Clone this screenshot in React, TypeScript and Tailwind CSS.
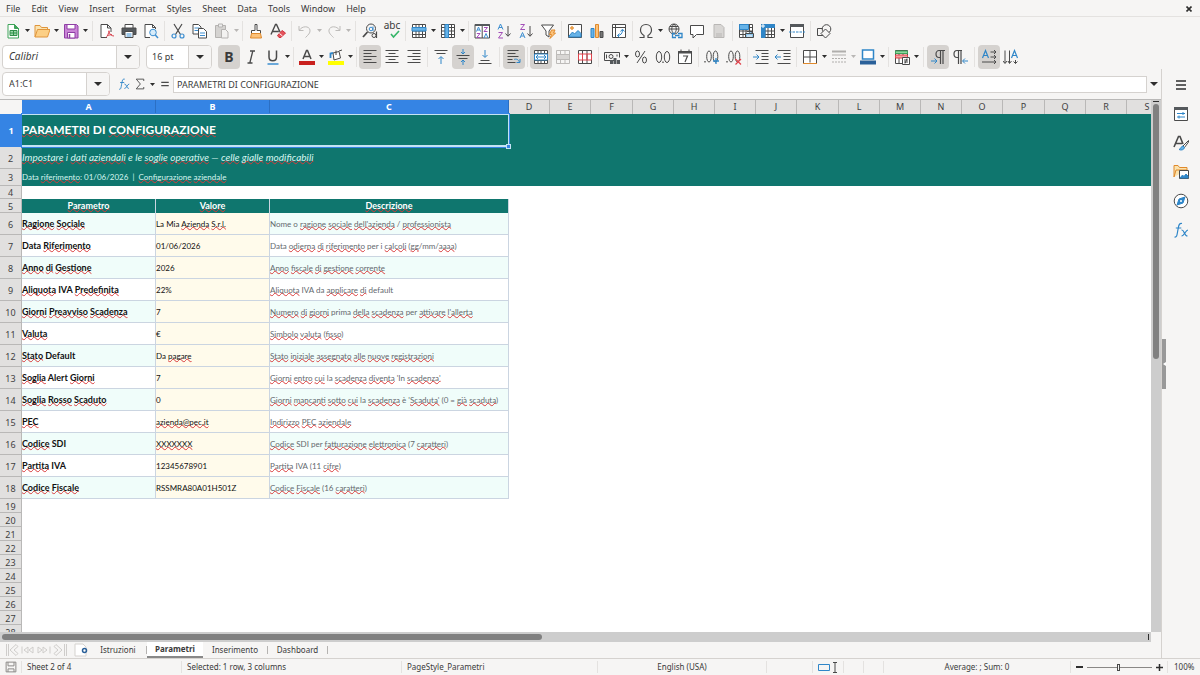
import type { ReactNode } from "react";

type IconProps = { children: ReactNode; size?: string };

const Svg = ({ children, size = "w-4 h-4" }: IconProps) => (
  <svg viewBox="0 0 16 16" className={size} fill="none" stroke="#4a4a4a" strokeWidth="1" aria-hidden="true">
    {children}
  </svg>
);

const grid = "M1.5 1.5h13v13h-13zM1.5 4.5h13M1.5 8h13M1.5 11.5h13M5 1.5v13M8 1.5v13M11.5 1.5v13";

const icons: Record<string, ReactNode> = {
  new: (
    <>
      <path d="M3 1.5h6.5l4 4v9.500h-10.500z" fill="#fff" stroke="#3fa35a" />
      <path d="M9.500 1.500l4 4h-4z" fill="#3fa35a" stroke="#3fa35a" />
      <path d="M5 7.500h7v5h-7zM5 10h7M8.500 7.500v5" fill="#9bd8a8" stroke="#2f8f4a" />
    </>
  ),
  open: (
    <>
      <path d="M1 14V2.500h5l1.500 2h6V6" fill="#fbe3ae" stroke="#e0953c" />
      <path d="M1 14L3.500 6.500H16L13.500 14z" fill="#fccf85" stroke="#e0953c" />
    </>
  ),
  save: (
    <>
      <path d="M1.500 1.500h12l1.500 1.500v12h-13.500z" fill="#c983d6" stroke="#8f3fa5" />
      <path d="M4 1.500h8v4.500h-8zM4.500 9.500h7.500v5.500h-7.500z" fill="#fff" stroke="#8f3fa5" />
      <path d="M6.500 11v4" stroke="#8f3fa5" strokeWidth="1.500" />
    </>
  ),
  pdf: (
    <>
      <path d="M12 9V5L8.500 1.500H2v13h6" fill="#fff" />
      <path d="M8.500 1.500V5H12" />
      <path d="M10 7.500c0 3-2 6-3 7M10 8c0 3 2.500 5 5 5M8 12.500l5-1" stroke="#d9434e" />
    </>
  ),
  print: (
    <>
      <path d="M4 5V1.500h8V5" fill="#fff" />
      <path d="M1 5h14v6.500H1z" fill="#55595c" />
      <path d="M4 8.500h8v6H4z" fill="#fff" />
      <path d="M5.500 11h5M5.500 13h5" stroke="#3d8ed0" />
    </>
  ),
  preview: (
    <>
      <path d="M12.500 6V4.500L9.500 1.500H2v13h5" fill="#fff" />
      <path d="M9.500 1.500v3h3" />
      <circle cx="10" cy="9.500" r="3.300" fill="#d7ecfa" stroke="#3d8ed0" />
      <path d="M12.300 12l2.700 3" stroke="#3d8ed0" strokeWidth="1.500" />
    </>
  ),
  cut: (
    <>
      <path d="M4 1l6.500 10.500M12 1L5.500 11.500" strokeWidth="1.200" />
      <circle cx="4" cy="13" r="2" stroke="#3d8ed0" strokeWidth="1.200" />
      <circle cx="12" cy="13" r="2" stroke="#3d8ed0" strokeWidth="1.200" />
    </>
  ),
  copy: (
    <>
      <path d="M1 1.500h5.500l2.500 2.500v7H1z" fill="#fff" />
      <path d="M2.500 5h5M2.500 7.500h5" stroke="#3d8ed0" />
      <path d="M6.500 5.500h5l3 3v6.500h-8z" fill="#fff" />
      <path d="M8 10h5M8 12.500h5" stroke="#3d8ed0" />
    </>
  ),
  paste: (
    <>
      <path d="M1.500 2.500h10v12h-10z" fill="#d5d3d1" stroke="#b5b3b1" />
      <path d="M4.500 1h4v3h-4z" fill="#eee" stroke="#b5b3b1" />
      <path d="M7.500 6.500h4l2.500 2.500v6H7.500z" fill="#f3f2f1" stroke="#b5b3b1" />
    </>
  ),
  clone: (
    <>
      <path d="M7 1.500h2v6h3.500v3h-9v-3H7z" fill="#fff" />
      <path d="M3.500 10.500h9l1 4.500h-11z" fill="#fcc27a" stroke="#e08a2c" />
    </>
  ),
  clear: (
    <>
      <path d="M1 11.500L5.500 1.500h1L10 9M2.800 8.500h6" strokeWidth="1.400" />
      <path d="M7.500 12.500l4.500-5 3.500 2.500-4.500 4.500H9z" fill="#e5545c" stroke="#d0343e" />
      <path d="M9.500 10.500l3 2.500" stroke="#fff" />
    </>
  ),
  undo: <path d="M2 3v4.500h4.500M2.500 7C5 3 12 2.500 13 7c.5 3-2 5-4.500 7.500" stroke="#bdbbb9" />,
  redo: <path d="M14 3v4.500H9.500M13.500 7C11 3 4 2.500 3 7c-.5 3 2 5 4.500 7.500" stroke="#bdbbb9" />,
  find: (
    <>
      <circle cx="9" cy="5.500" r="4.500" />
      <path d="M5.500 9L1 14" strokeWidth="1.800" />
      <circle cx="9" cy="6" r="1.800" stroke="#3d8ed0" />
      <path d="M11 3.500V8" stroke="#3d8ed0" />
      <circle cx="12" cy="12.500" r="2" />
      <path d="M14.500 8.500V15" strokeWidth="1.200" />
    </>
  ),
  spell: <path d="M7 11l2.500 3L15 8" stroke="#35b568" strokeWidth="1.600" />,
  row: (
    <>
      <path d={grid} fill="#fff" />
      <path d="M1 4.500h14V8H1z" fill="#66b3e8" stroke="#2f86c8" />
    </>
  ),
  col: (
    <>
      <path d={grid} fill="#fff" />
      <path d="M5 1.500h3.500v13H5z" fill="#66b3e8" stroke="#2f86c8" />
    </>
  ),
  sort: (
    <>
      <path d="M1 1.500h14.500v13.500H1zM8.200 1.500V15" fill="#fff" />
      <path d="M1 1h14.500v2H1z" fill="#55595c" stroke="none" />
      <path d="M2.500 8.500L4.500 4l2 4.500M3.200 7h2.500M10 15l2-4.500 2 4.500" stroke="#3d8ed0" />
      <path d="M2.800 10.500h3.200L2.800 14.500h3.500M10 4.500h3.500L10 8.500h3.500" stroke="#a34fb8" />
    </>
  ),
  az: (
    <>
      <path d="M2 6.500L4.500 1l2.500 5.500M3 4.500h3" stroke="#3d8ed0" />
      <path d="M2.500 9.500h4l-4 5.500h4.500" stroke="#a34fb8" />
      <path d="M12 3v10M9.500 10.500L12 13.300l2.500-2.800" />
    </>
  ),
  za: (
    <>
      <path d="M2.500 1.500h4L2.500 6.500h4.500" stroke="#a34fb8" />
      <path d="M2 15l2.500-5.500L7 15M3 13h3" stroke="#3d8ed0" />
      <path d="M12 3v10M9.500 10.500L12 13.300l2.500-2.800" />
    </>
  ),
  filter: (
    <>
      <path d="M1.500 2h12L9 8v6l-3-2V8z" fill="#fff" />
      <path d="M11.500 7h3.500l-1.500 3h2L10 15.500l1.500-4H9.500z" fill="#fcc27a" stroke="#e08a2c" />
    </>
  ),
  image: (
    <>
      <path d="M1.500 1.500h13v13h-13z" fill="#fff" />
      <circle cx="5" cy="5" r="1.300" fill="#fcc27a" stroke="#e08a2c" />
      <path d="M2 13l3.500-4 2 2L11 7.500l3 3V14H2z" fill="#66b3e8" stroke="#2f86c8" />
    </>
  ),
  chart: (
    <>
      <path d="M2 5.500h3v9H2z" fill="#66b3e8" stroke="#2f86c8" />
      <path d="M6.500 1.500h3v13h-3z" fill="#fcc27a" stroke="#e08a2c" />
      <path d="M11 8.500h3v6h-3z" fill="#777" />
    </>
  ),
  pivot: (
    <>
      <path d="M1.500 1.500h13v13h-13zM1.500 4.500h13M4.500 1.500v13" fill="#fff" />
      <path d="M6.500 12.500c3 0 5-2 5-5.500M9.500 8.500l2-2.300 2 2.300M8.500 10.500l-2 2 2 2" stroke="#2f86c8" />
    </>
  ),
  omega: <path d="M1.500 14.500H6v-2C3.500 11 2.500 9 2.500 7c0-3 2-5.500 5.500-5.500s5.500 2.500 5.500 5.500c0 2-1 4-3.500 5.500v2h4.500" strokeWidth="1.200" />,
  link: (
    <>
      <circle cx="7" cy="6" r="5" />
      <path d="M2 6h10M7 1c-3 3-3 7 0 10M7 1c3 3 3 7 0 10M3 3.500h8" />
      <path d="M8 10.500H5.500v4H9M11 10.500h4v4h-4M8 12.500h4.500" stroke="#2f86c8" strokeWidth="1.300" />
    </>
  ),
  comment: <path d="M1.500 2.500h13v9H7.500L4 15v-3.500H1.500z" fill="#fff" />,
  headfoot: <path d="M3 1.500h7l3 3v10H3zM5 11h6M5 13h6" fill="#d8d6d4" stroke="#b9b7b5" />,
  printarea: (
    <>
      <path d={grid} fill="#fff" />
      <path d="M1.500 1.500h9v5h-9z" fill="#66b3e8" stroke="#2f86c8" />
      <path d="M9 8.500h5v2M7.500 10.500h8v4h-8z" fill="#8cc4ea" />
      <path d="M9 13h5" stroke="#fff" />
    </>
  ),
  freeze: (
    <>
      <path d={grid} fill="#fff" />
      <path d="M1.500 1.500h13v3H5v10H1.500z" fill="#2f86c8" stroke="#2f86c8" />
      <path d="M3 1v4M1 3h4" stroke="#fff" />
    </>
  ),
  split: (
    <>
      <path d="M1.500 1.500h13v13h-13z" fill="#fff" />
      <path d="M1 1h14v3H1z" fill="#55595c" stroke="none" />
      <path d="M0 9h16" stroke="#2f86c8" strokeDasharray="2.500 1" />
    </>
  ),
  shapes: (
    <>
      <path d="M1.500 5.500h8v7h-8z" />
      <circle cx="10.500" cy="6" r="4.300" fill="#f6f5f4" />
      <path d="M9.500 6l4.500 4.500-4.500 4.500L5 10.500z" fill="#f6f5f4" />
    </>
  ),
  italic: <path d="M7 2h5M4.500 14h5M9.800 2L6.800 14" strokeWidth="1.300" />,
  underline: (
    <>
      <path d="M4 1.500v6.500c0 5 7.500 5 7.500 0V1.500" strokeWidth="1.500" />
      <path d="M2.500 15h11" stroke="#3d8ed0" strokeWidth="1.500" />
    </>
  ),
  fontcolor: (
    <>
      <path d="M4 10L7.500 1.500h1L12 10M5.500 7.500h5" strokeWidth="1.500" />
      <path d="M0 12h16v4H0z" fill="#c9211e" stroke="none" />
    </>
  ),
  highlight: (
    <>
      <path d="M5 4l6-1.500 1.500 6.500-6.500 2zM8 1.500V6" fill="#fff" />
      <path d="M2.500 9V4.500L5 4" stroke="#2f86c8" strokeWidth="1.800" />
      <path d="M11 2l3-1" />
      <path d="M0 12h16v4H0z" fill="#ffff00" stroke="none" />
    </>
  ),
  left: <path d="M1.500 1.500h13M1.500 4.500h8M1.500 7.500h13M1.500 10.500h8M1.500 13.500h13" />,
  center: <path d="M1.500 1.500h13M4.500 4.500h7M1.500 7.500h13M4.500 10.500h7M1.500 13.500h13" />,
  right: <path d="M1.500 1.500h13M6.500 4.500h8M1.500 7.500h13M6.500 10.500h8M1.500 13.500h13" />,
  top: (
    <>
      <path d="M1.500 1.500h13M3.500 4.500h9" />
      <path d="M8 15V8M5.500 10L8 7.500l2.500 2.500" stroke="#2f86c8" />
    </>
  ),
  middle: (
    <>
      <path d="M1.500 6.500h13M3.500 9.500h9" />
      <path d="M8 0v5M6 3l2 2 2-2M8 16v-5M6 13l2-2 2 2" stroke="#2f86c8" />
    </>
  ),
  bottom: (
    <>
      <path d="M3.500 11.500h9M1.500 14.500h13" />
      <path d="M8 1v7M5.500 6L8 8.500 10.500 6" stroke="#2f86c8" />
    </>
  ),
  wrap: (
    <>
      <path d="M1.500 1.500h11M1.500 4.500h8M1.500 7.500h11M1.500 10.500h5M1.500 13.500h8" />
      <path d="M8 10.500c2-1 5 0 5.500 3M10.500 13.500h3.500V10" stroke="#2f86c8" />
    </>
  ),
  merge: (
    <>
      <path d={grid} fill="#fff" />
      <path d="M1.500 5h13v6h-13z" fill="#fff" stroke="#2f86c8" />
      <path d="M3 8h10M5 6L3 8l2 2M11 6l2 2-2 2" stroke="#2f86c8" />
    </>
  ),
  mergeoff: (
    <>
      <path d="M1.500 1.500h13v13h-13zM5.500 1.500v4M10 1.500v4M5.500 10.500v4M10 10.500v4" stroke="#bdbbb9" />
      <path d="M1.500 5.500h13v5h-13z" fill="#d8d6d4" stroke="#bdbbb9" />
    </>
  ),
  unmerge: (
    <>
      <path d="M1.500 1.500h13v13h-13zM5.500 1.500v13M10 1.500v13" fill="#fff" />
      <path d="M1.500 5h13v6h-13zM5.500 5v6M10 5v6" stroke="#e0434c" />
    </>
  ),
  currency: (
    <>
      <path d="M10 11.500H.5v-8h15v5" />
      <circle cx="7" cy="7.500" r="2" />
      <path d="M2.500 5.500v4M13 5.500v2" />
      <path d="M6 11h3v4H6zM9.500 9h3v6h-3zM13 11h3v4h-3z" fill="#55595c" stroke="none" />
    </>
  ),
  percent: (
    <>
      <ellipse cx="4.500" cy="5" rx="2" ry="3" />
      <ellipse cx="11.500" cy="11" rx="2" ry="3" />
      <path d="M12 2L4 14" />
    </>
  ),
  number: (
    <>
      <ellipse cx="4" cy="8" rx="2.700" ry="5.500" />
      <ellipse cx="12" cy="8" rx="2.700" ry="5.500" />
      <path d="M8 12.500v1.500" strokeWidth="1.300" />
    </>
  ),
  date: (
    <>
      <path d="M1.500 2.500h13v12h-13zM4 .5v3M12 .5v3" fill="#fff" />
      <path d="M1.500 2.500h13v1.500h-13z" fill="#55595c" />
      <path d="M6 7h4.500l-2.500 6" strokeWidth="1.200" />
    </>
  ),
  adddec: (
    <>
      <ellipse cx="5" cy="7.500" rx="2.300" ry="5.500" />
      <ellipse cx="11.500" cy="7.500" rx="2.300" ry="5.500" />
      <path d="M1 12v1.500" strokeWidth="1.300" />
      <path d="M12 9v6M9 12h6" stroke="#2f86c8" strokeWidth="1.300" />
    </>
  ),
  deldec: (
    <>
      <ellipse cx="5" cy="7.500" rx="2.300" ry="5.500" />
      <ellipse cx="11.500" cy="7.500" rx="2.300" ry="5.500" />
      <path d="M1 12v1.500" strokeWidth="1.300" />
      <path d="M9.500 10l5.500 5.500M15 10l-5.500 5.500" stroke="#e0434c" strokeWidth="1.200" />
    </>
  ),
  indent: (
    <>
      <path d="M2.500 1.500h13M8.500 4.500h7M8.500 7.500h7M8.500 10.500h7M2.500 14.500h13" />
      <path d="M0 8h6M3.500 5.500L6 8l-2.500 2.500" stroke="#2f86c8" />
    </>
  ),
  outdent: (
    <>
      <path d="M2.500 1.500h13M8.500 4.500h7M8.500 7.500h7M8.500 10.500h7M2.500 14.500h13" />
      <path d="M0 8h6M2.500 5.500L0 8l2.500 2.500" stroke="#2f86c8" />
    </>
  ),
  borders: (
    <>
      <path d="M1.500 14V1.500h13V14M8 1.500v12M1.500 8h13" fill="#fff" />
      <path d="M1 14.500h14" stroke="#e08a2c" />
    </>
  ),
  linestyle: (
    <>
      <path d="M1 2.500h14" stroke="#b0aeac" strokeWidth="2" />
      <path d="M1 6h14" stroke="#b0aeac" />
      <path d="M1 9.500h14M1 13h14" stroke="#b0aeac" strokeDasharray="2 1" />
    </>
  ),
  bordercolor: (
    <>
      <path d="M2.500 1h11v9h-11z" fill="#fff" stroke="#2f86c8" strokeWidth="1.500" />
      <path d="M0 11.500h16v4H0z" fill="#2a6099" stroke="none" />
    </>
  ),
  conditional: (
    <>
      <path d="M1.500 1.500h12v13h-12zM5 1.500v13M9 1.500v13" fill="#fff" />
      <path d="M1.500 2h12v2.500h-12z" fill="#8fd6a0" stroke="#3fa35a" />
      <path d="M1.500 6h12v3h-12z" fill="#f4a3a3" stroke="#e0434c" />
      <path d="M8.500 8.500h7v7h-7zM10 11h4M10 13h4M13 9.500l-2 5" fill="#fff" />
    </>
  ),
  ltr: (
    <>
      <path d="M15 1.500H9a3 3.500 0 0 0 0 7h1M10.500 1.500V15M13 1.500V15" strokeWidth="1.200" />
      <path d="M1 12h6M4.500 9.500L7 12l-2.500 2.500" stroke="#2f86c8" />
    </>
  ),
  rtl: (
    <>
      <path d="M10 1.500H5a3 3.500 0 0 0 0 7h1M6.500 1.500V15M9 1.500V15" strokeWidth="1.200" />
      <path d="M16 12h-5M13 9.500L10.500 12l2.500 2.500" stroke="#2f86c8" />
    </>
  ),
  horizontal: (
    <>
      <path d="M1.500 9L4.500 1.500 7.500 9M2.500 6.500h4" stroke="#2f86c8" strokeWidth="1.200" />
      <path d="M9.500 3H15M13 1l2 2-2 2M9.500 8H15M13 6l2 2-2 2M1 13h14M13 11l2 2-2 2" />
    </>
  ),
  vertical: (
    <>
      <path d="M8.500 9l3-7.500 3 7.500M9.500 6.500h4" stroke="#2f86c8" strokeWidth="1.200" />
      <path d="M2 1.500V14M0 12l2 2.500L4 12M6.500 1.500V14M5 12l1.500 2.500L8.500 12M12.500 11v3.500M10.500 12.500l2 2 2-2" />
    </>
  ),
  properties: (
    <>
      <path d="M1.500 1.500h13v13h-13z" fill="#fff" />
      <path d="M1 1h14v3H1z" fill="#55595c" stroke="none" />
      <path d="M4 7.500h8M4 11h8M10 6v3M6 9.500v3" stroke="#2f86c8" />
    </>
  ),
  styles: (
    <>
      <path d="M1 12L5.500 1.500h1.500L10 9M3 8.500h6" strokeWidth="1.600" />
      <path d="M15.500 5.500L10 11l1.500 1.500L15.500 7z" fill="#fff" />
      <path d="M10 11c-2 0-2 3-4 3.500 2 1 5 .5 5.500-2z" fill="#66b3e8" stroke="#2f86c8" />
    </>
  ),
  gallery: (
    <>
      <path d="M1 13V1.500h4L6.500 3.500H14V6M1 13L3 6h11" fill="#fbe3ae" stroke="#e08a2c" />
      <path d="M6.500 6.500h9v8h-9z" fill="#fff" />
      <path d="M7 14l2.500-3 1.500 1.500 2-2.500 2 2v2z" fill="#2f86c8" stroke="#2f86c8" />
    </>
  ),
  navigator: (
    <>
      <circle cx="8" cy="8" r="6.800" fill="#fff" />
      <path d="M12 4l-2 6-6 2 2-6z" fill="#2f86c8" stroke="#2f86c8" />
      <circle cx="8" cy="8" r="1" fill="#fff" stroke="none" />
    </>
  ),
  fx: (
    <>
      <path d="M1.500 15c2.500.5 2.500-2 3.200-6l1-5C6.200 2 7 1 9 1.500M2.800 6h5.500" stroke="#2f86c8" strokeWidth="1.200" />
      <path d="M8.500 8c3-.5 2.500 6 6 6M15 8c-2.500 0-3.500 6-6.500 6" stroke="#2f86c8" strokeWidth="1.200" />
    </>
  ),
  sigma: <path d="M13 4V1.500H3L8.500 8 3 14.500h10V12" strokeWidth="1.200" />,
  equals: <path d="M2 5.500h12M2 10.500h12" strokeWidth="2" />,
  menu: <path d="M3 4h10M3 8h10M3 12h10" stroke="#2e2e2e" strokeWidth="1.500" />,
};

const Arrow = ({ muted = false }: { muted?: boolean }) => (
  <svg viewBox="0 0 5 3" className={muted ? "w-[5px] h-[3px] fill-[#b9b7b5]" : "w-[5px] h-[3px] fill-[#2e2e2e]"} aria-hidden="true">
    <path d="M0 0h5L2.500 3z" />
  </svg>
);

// Items: "-" thin separator, "=" wide separator, "v"/"w" drop-down arrow (active/disabled), "*name" pressed
const ToolItems = ({ items }: { items: string }) => (
  <>
    {items.split(" ").map((item, i) => {
      if (item === "-" || item === "=") {
        return (
          <span key={i} className={item === "=" ? "w-[7px] flex justify-center" : "w-[5px] flex justify-center"}>
            <span className="w-px h-5 bg-[#e4e2e0]" />
          </span>
        );
      }
      if (item === "v" || item === "w") {
        return (
          <button key={i} aria-label="More options" className="w-[7px] h-6 flex items-center justify-center">
            <Arrow muted={item === "w"} />
          </button>
        );
      }
      const pressed = item.startsWith("*");
      const name = item.replace("*", "");
      return (
        <button
          key={i}
          aria-label={name}
          aria-pressed={pressed}
          className={
            pressed
              ? "w-[22px] h-6 shrink-0 flex items-center justify-center rounded bg-[#d5d2cf] relative"
              : "w-[22px] h-6 shrink-0 flex items-center justify-center relative"
          }
        >
          {name === "bold" ? <span className="text-[14px] leading-6 font-bold">B</span> : <Svg>{icons[name]}</Svg>}
          {name === "spell" && <span className="absolute left-0 right-0 top-0 text-center text-[10px] leading-3">abc</span>}
        </button>
      );
    })}
  </>
);

const Combo = ({ label, value, className, inputClass }: { label: string; value: string; className: string; inputClass: string }) => (
  <div className={className}>
    <input aria-label={label} defaultValue={value} className={inputClass} />
    <button aria-label={label + " list"} className="w-[23px] shrink-0 flex items-center justify-center border-l border-[#d5d2cf] bg-[#f6f5f4]">
      <svg viewBox="0 0 8 4" className="w-2 h-1 fill-[#2e2e2e]" aria-hidden="true">
        <path d="M0 0h8L4 4z" />
      </svg>
    </button>
  </div>
);

// A leading "~" marks a word the spell checker does not know
const Spell = ({ text }: { text: string }) => (
  <>
    {text.split(/(~[\p{L}\d.@']+)/u).map((part, i) =>
      part.startsWith("~") ? (
        <span key={i} className="underline decoration-wavy decoration-[#d93a3a] decoration-1 -underline-offset-1 [text-decoration-skip-ink:none]">
          {part.slice(1)}
        </span>
      ) : (
        part
      )
    )}
  </>
);

const menus = ["File", "Edit", "View", "Insert", "Format", "Styles", "Sheet", "Data", "Tools", "Window", "Help"];

const narrowColumns = "DEFGHIJKLMNOPQRS".split("");

const params = [
  ["~Ragione ~Sociale", "La Mia ~Azienda ~S.r.l.", "Nome o ~ragione ~sociale ~dell'azienda / ~professionista"],
  ["Data ~Riferimento", "01/06/2026", "Data ~odierna ~di ~riferimento per i ~calcoli (~gg/mm/~aaaa)"],
  ["~Anno ~di ~Gestione", "2026", "~Anno ~fiscale ~di ~gestione ~corrente"],
  ["~Aliquota IVA ~Predefinita", "22%", "~Aliquota IVA da ~applicare ~di default"],
  ["~Giorni ~Preavviso ~Scadenza", "7", "~Numero ~di ~giorni prima ~della ~scadenza per ~attivare ~l'allerta"],
  ["~Valuta", "€", "~Simbolo ~valuta (~fisso)"],
  ["~Stato Default", "Da ~pagare", "~Stato ~iniziale ~assegnato ~alle ~nuove ~registrazioni"],
  ["~Soglia Alert ~Giorni", "7", "~Giorni ~entro ~cui la ~scadenza ~diventa 'In ~scadenza'"],
  ["~Soglia ~Rosso ~Scaduto", "0", "~Giorni ~mancanti ~sotto ~cui la ~scadenza è '~Scaduta' (0 = ~già ~scaduta)"],
  ["~PEC", "~azienda@pec.it", "~Indirizzo ~PEC ~aziendale"],
  ["~Codice SDI", "~XXXXXXX", "~Codice SDI per ~fatturazione ~elettronica (7 ~caratteri)"],
  ["~Partita IVA", "12345678901", "~Partita IVA (11 ~cifre)"],
  ["~Codice ~Fiscale", "RSSMRA80A01H501Z", "~Codice ~Fiscale (16 ~caratteri)"],
];

const emptyRows = [19, 20, 21, 22, 23, 24, 25, 26, 27, 28];

const RowHead = ({ n }: { n: number }) => (
  <th scope="row" className="border-r border-b border-[#b9b8b7] bg-[#e1e0df] p-0 pt-px text-[9px] leading-[11px] font-normal text-center text-[#3f3f3f] font-['Noto_Sans',sans-serif]">
    {n}
  </th>
);

const Sheet = () => (
  <table className="table-fixed border-separate border-spacing-0 w-[1167px] font-[Lato,sans-serif]">
    <colgroup>
      <col className="w-[22px]" />
      <col className="w-[134px]" />
      <col className="w-[114px]" />
      <col className="w-[239px]" />
      {narrowColumns.map((c, i) => (
        <col key={c} className={i % 5 === 2 ? "w-[42px]" : "w-[41px]"} />
      ))}
    </colgroup>
    <thead>
      <tr className="h-[14px] text-[9px] leading-3 font-['Noto_Sans',sans-serif]">
        <td className="p-0 bg-[#f6f5f4]" />
        {["A", "B", "C"].map((c) => (
          <th key={c} scope="col" className="p-0 bg-[#3584e4] border-r border-[#2b6fc4] text-white font-bold">
            {c}
          </th>
        ))}
        {narrowColumns.map((c) => (
          <th key={c} scope="col" className="p-0 bg-[#e1e0df] border-r border-[#b9b8b7] text-[#3f3f3f] font-normal">
            {c}
          </th>
        ))}
      </tr>
    </thead>
    <tbody>
      <tr className="h-[33px]">
        <th scope="row" className="p-0 bg-[#3584e4] text-white text-[9px] font-bold font-['Noto_Sans',sans-serif]">1</th>
        <td colSpan={3} className="relative p-0 bg-[#0f766e] border-t border-b-2 border-r border-[#c4e3f5] outline-1 outline-[#3584e4] text-white text-[12px] leading-5 font-bold">
          <Spell text="~PARAMETRI DI ~CONFIGURAZIONE" />
          <span className="absolute -right-[3px] -bottom-[4px] w-[5px] h-[5px] bg-[#3584e4] border border-[#c4e3f5]" />
        </td>
        <td colSpan={16} className="p-0 bg-[#0f766e]" />
      </tr>
      <tr className="h-[22px]">
        <RowHead n={2} />
        <td colSpan={19} className="p-0 pb-0.5 bg-[#0f766e] text-[#d5f5ef] text-[10px] leading-4 italic">
          <Spell text="~Impostare i ~dati ~aziendali e le ~soglie ~operative — ~celle ~gialle ~modificabili" />
        </td>
      </tr>
      <tr className="h-[17px]">
        <RowHead n={3} />
        <td colSpan={19} className="p-0 pb-0.5 bg-[#0f766e] text-[#d5f5ef] text-[8px] leading-3">
          <Spell text="Data ~riferimento: 01/06/2026 &nbsp;|&nbsp; ~Configurazione ~aziendale" />
        </td>
      </tr>
      <tr className="h-[13px]">
        <RowHead n={4} />
        <td colSpan={19} className="p-0" />
      </tr>
      <tr className="h-[14px] text-[9px] leading-3 text-white">
        <RowHead n={5} />
        {["~Parametro", "~Valore", "~Descrizione"].map((t) => (
          <th key={t} scope="col" className="p-0 bg-[#0f766e] border-r border-[#cbd5e1] font-bold">
            <Spell text={t} />
          </th>
        ))}
      </tr>
      {params.map(([name, value, info], i) => {
        const tint = i % 2 === 0 ? "bg-[#f0fdfa]" : "bg-white";
        return (
          <tr key={name} className="h-[22px] text-[9px] leading-4 text-[#111] whitespace-nowrap">
            <RowHead n={i + 6} />
            <td className={`p-0 border-r border-b border-[#cbd5e1] font-bold ${tint}`}>
              <Spell text={name} />
            </td>
            <td className="p-0 border-r border-b border-[#cbd5e1] bg-[#fffbeb] text-[8px]">
              <Spell text={value} />
            </td>
            <td className={`p-0 border-r border-b border-[#cbd5e1] text-[8px] text-[#64696e] ${tint}`}>
              <Spell text={info} />
            </td>
          </tr>
        );
      })}
      {emptyRows.map((n) => (
        <tr key={n} className="h-[14px]">
          <RowHead n={n} />
          <td colSpan={19} className="p-0" />
        </tr>
      ))}
    </tbody>
  </table>
);

const TabDivider = () => <span className="w-px h-2 bg-[#b5b3b1]" />;

const Tabs = () => (
  <div className="h-4 flex items-center text-[8px] leading-3">
    <svg viewBox="0 0 62 14" className="w-[62px] h-[14px] ml-1.5" fill="none" stroke="#cfcdcb" aria-hidden="true">
      <path d="M.5 1v12M2.500 1v12M10 1.500L4 7l6 5.500 2-2L8 7l4-3.500zM16 3.500v7M22 4l-4 3 4 3zM27 4l-4 3 4 3zM32 4v6l4-3zM37 4v6l4-3zM44 3.500v7M50 1.500L56 7l-6 5.500-2-2L52 7l-4-3.500zM58.500 1v12M60.500 1v12" />
    </svg>
    <button aria-label="Add sheet" className="w-4 ml-1.5 flex">
      <svg viewBox="0 0 14 14" className="w-3.5 h-3.5" fill="none" aria-hidden="true">
        <path d="M1 1h8l3 3v9H1z" fill="#fff" stroke="#d5d2cf" />
        <circle cx="10.500" cy="7.500" r="2" stroke="#2a6099" strokeWidth="1.500" />
      </svg>
    </button>
    <button className="w-14 h-4">Istruzioni</button>
    <TabDivider />
    <button className="w-14 h-4 bg-white border-b-2 border-[#888] font-bold">Parametri</button>
    <button className="w-16 h-4">Inserimento</button>
    <TabDivider />
    <button className="w-[59px] h-4">Dashboard</button>
    <TabDivider />
  </div>
);

const StatusBar = () => (
  <footer className="h-[17px] shrink-0 flex items-center border-t border-[#d5d2cf] text-[8px] leading-3">
    <div className="w-[22px] flex justify-center border-r border-[#e4e2e0]">
      <svg viewBox="0 0 16 16" className="w-3 h-3" fill="none" stroke="#8a8886" strokeWidth="1.300" aria-hidden="true">
        <path d="M1.500 1.500h13v13h-13zM4 1.500v5h8v-5M4 14.500v-4h8v4" />
      </svg>
    </div>
    <span className="w-[160px] pl-[5px] border-r border-[#e4e2e0]">Sheet 2 of 4</span>
    <span className="w-[220px] pl-[5px] border-r border-[#e4e2e0]">Selected: 1 row, 3 columns</span>
    <span className="w-[196px] pl-[5px] border-r border-[#e4e2e0]">PageStyle_Parametri</span>
    <span className="flex-1 text-center border-r border-[#e4e2e0]">English (USA)</span>
    <span className="w-[46px] h-3 border-r border-[#e4e2e0]" />
    <span className="w-[31px] h-3 flex items-center justify-center gap-1 border-r border-[#e4e2e0]">
      <svg viewBox="0 0 20 12" className="w-5 h-3" fill="none" aria-hidden="true">
        <path d="M.5 3.500h11v6H.5z" stroke="#2f86c8" />
        <path d="M15 1.500h4M15 11.500h4M17 1.500v10" stroke="#4a4a4a" />
      </svg>
    </span>
    <span className="w-5 h-3 border-r border-[#e4e2e0]" />
    <span className="w-5 h-3 border-r border-[#e4e2e0]" />
    <span className="w-[187px] h-3 text-center border-r border-[#e4e2e0]">Average: ; Sum: 0</span>
    <div className="flex items-center gap-1 pl-[5px] pr-1">
      <button aria-label="Zoom out" className="w-[7px] h-0.5 bg-[#2e2e2e]" />
      <input
        type="range"
        aria-label="Zoom"
        defaultValue="48"
        className="w-[65px] h-2 appearance-none bg-transparent [&::-webkit-slider-runnable-track]:h-px [&::-webkit-slider-runnable-track]:bg-[#8a8886] [&::-webkit-slider-thumb]:appearance-none [&::-webkit-slider-thumb]:w-[3px] [&::-webkit-slider-thumb]:h-[7px] [&::-webkit-slider-thumb]:-mt-[3px] [&::-webkit-slider-thumb]:border [&::-webkit-slider-thumb]:border-[#4a4a4a] [&::-webkit-slider-thumb]:bg-[#f6f5f4]"
      />
      <button aria-label="Zoom in" className="w-[7px]">
        <svg viewBox="0 0 7 7" className="w-[7px] h-[7px]" stroke="#2e2e2e" strokeWidth="1.500" aria-hidden="true">
          <path d="M0 3.500h7M3.500 0v7" />
        </svg>
      </button>
    </div>
    <span className="w-[33px] pl-1.5 border-l border-[#e4e2e0]">100%</span>
  </footer>
);

export default function App() {
  return (
    <div className="h-screen flex flex-col overflow-hidden bg-[#f6f5f4] text-[#3a3a3a] font-['Noto_Sans',sans-serif]">
      <nav className="h-[17px] shrink-0 flex items-center border-b border-[#e4e2e0] pt-px pl-1.5 pr-2 gap-[11px] text-[9px] leading-3">
        {menus.map((m) => (
          <button key={m}>{m}</button>
        ))}
        <button aria-label="Close document" className="ml-auto">
          <svg viewBox="0 0 6 6" className="w-1.5 h-1.5" stroke="#2e2e2e" strokeWidth="1.600" aria-hidden="true">
            <path d="M.5.500l5 5M5.500.500l-5 5" />
          </svg>
        </button>
      </nav>
      <div className="h-[27px] shrink-0 flex items-center pl-0.5">
        <ToolItems items="new v open v save v = pdf print preview - cut copy paste w - clone clear - undo w redo w = find spell - row v col v - sort az za filter - image chart pivot - omega v link comment headfoot - printarea freeze v split - shapes" />
      </div>
      <div className="h-[25px] shrink-0 flex items-center pl-0.5">
        <Combo label="Font name" value="Calibri" className="flex w-[138px] h-6 rounded border border-[#d5d2cf] bg-white overflow-hidden mr-[6px]" inputClass="w-0 flex-1 px-1.5 text-[10px] italic" />
        <Combo label="Font size" value="16 pt" className="flex w-[66px] h-6 rounded border border-[#d5d2cf] bg-white overflow-hidden mr-[6px]" inputClass="w-0 flex-1 px-[5px] text-[9px]" />
        <ToolItems items="*bold italic underline v - fontcolor v highlight v - *left center right - top *middle bottom = *wrap - *merge mergeoff unmerge - currency v percent number date - adddec deldec - indent outdent - borders v linestyle w bordercolor v - conditional v = *ltr rtl = *horizontal vertical" />
      </div>
      <div className="flex-1 min-h-0 flex">
        <main className="flex-1 min-w-0 flex flex-col border-r border-[#d5d2cf]">
          <div className="h-[31px] shrink-0 flex items-center pl-0.5 border-b border-[#b9b8b7]">
            <Combo label="Name box" value="A1:C1" className="flex w-[108px] h-6 rounded border border-[#d5d2cf] bg-white overflow-hidden mr-[5px]" inputClass="w-0 flex-1 px-1.5 text-[9px]" />
            <button aria-label="Function wizard" className="w-[18px] flex justify-center"><Svg size="w-3 h-3">{icons.fx}</Svg></button>
            <button aria-label="Select function" className="w-[14px] flex justify-center"><Svg size="w-3 h-3">{icons.sigma}</Svg></button>
            <button aria-label="Function list" className="w-[10px] flex justify-center"><Arrow /></button>
            <button aria-label="Formula" className="w-4 flex justify-center"><Svg size="w-2.5 h-2.5">{icons.equals}</Svg></button>
            <input aria-label="Formula input" defaultValue="PARAMETRI DI CONFIGURAZIONE" className="flex-1 h-[17px] px-[3px] border border-[#d5d2cf] bg-white text-[9px]" />
            <button aria-label="Expand formula bar" className="w-[14px] flex justify-center">
              <svg viewBox="0 0 8 4" className="w-2 h-1 fill-[#2e2e2e]" aria-hidden="true">
                <path d="M0 0h8L4 4z" />
              </svg>
            </button>
          </div>
          <div className="flex-1 min-h-0 flex">
            <div className="flex-1 min-w-0 overflow-hidden bg-white">
              <Sheet />
            </div>
            <div className="w-[10px] shrink-0 flex flex-col items-center gap-0.5 bg-[#cdcdcd] pt-px">
              <span className="w-[6px] h-px shrink-0 bg-[#2e2e2e]" />
              <div className="w-[6px] h-[48%] rounded-full bg-[#808080]" />
            </div>
          </div>
          <div className="h-[10px] shrink-0 flex items-center bg-[#cdcdcd] pl-0.5 mr-[10px]">
            <div className="w-[47%] h-[6px] rounded-full bg-[#808080]" />
            <span className="ml-auto mr-0.5 w-px h-[6px] bg-[#2e2e2e]" />
          </div>
          <Tabs />
        </main>
        <aside className="w-[38px] shrink-0 flex flex-col items-center gap-[13px] pt-2 relative">
          <button className="absolute left-0 top-[270px] w-1 h-[50px] bg-[#999] flex items-center justify-center" aria-label="Hide sidebar">
            <svg viewBox="0 0 3 4" className="w-[3px] h-1 fill-white" aria-hidden="true">
              <path d="M3 0v4L0 2z" />
            </svg>
          </button>
          {["menu", "properties", "styles", "gallery", "navigator", "fx"].map((name) => (
            <button key={name} aria-label={name}>
              <Svg>{icons[name]}</Svg>
            </button>
          ))}
        </aside>
      </div>
      <StatusBar />
    </div>
  );
}
